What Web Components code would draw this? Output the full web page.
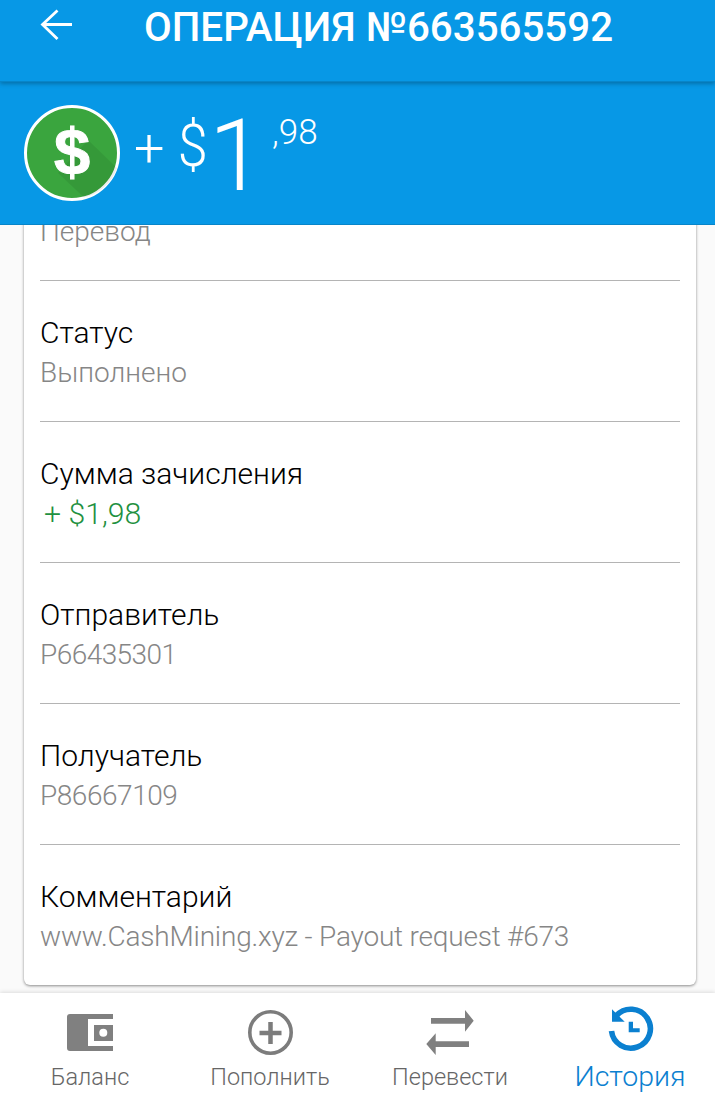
<!DOCTYPE html>
<html lang="ru">
<head>
<meta charset="utf-8">
<title>Операция</title>
<style>
  html, body { margin: 0; height: 100%; }
  body { font-family: Roboto, "Liberation Sans", sans-serif; background: #fafafa; overflow: hidden; }
  op-screen { height: 1103px; }
</style>
</head>
<body>
<op-screen>
  <op-topbar slot="top">ОПЕРАЦИЯ №663565592</op-topbar>
  <op-amount slot="top" whole="1" cents=",98"></op-amount>
  <op-card>
    <op-row value="Перевод"></op-row>
    <op-row label="Статус" value="Выполнено"></op-row>
    <op-row label="Сумма зачисления" value="+ $1,98" tone="green"></op-row>
    <op-row label="Отправитель" value="P66435301" tight="-0.55"></op-row>
    <op-row label="Получатель" value="P86667109" tight="-0.45"></op-row>
    <op-row label="Комментарий" value="www.CashMining.xyz - Payout request #673" tight="-0.2" last></op-row>
  </op-card>
  <op-tabs slot="bottom">
    <op-tab label="Баланс" icon="wallet"></op-tab>
    <op-tab label="Пополнить" icon="plus"></op-tab>
    <op-tab label="Перевести" icon="swap"></op-tab>
    <op-tab label="История" icon="history" active></op-tab>
  </op-tabs>
</op-screen>

<script>
class OpScreen extends HTMLElement {
    connectedCallback() {
        this.attachShadow({ mode: 'open' });
        this.shadowRoot.innerHTML = `
            <style>
                :host { display: flex; flex-direction: column; }
                .main {
                    flex: 1;
                    min-height: 0;
                    overflow: hidden;
                    display: flex;
                    flex-direction: column;
                    justify-content: flex-end;
                    padding: 0 19px 8px 24px;
                }
            </style>
            <slot name="top"></slot>
            <div class="main"><slot></slot></div>
            <slot name="bottom"></slot>
        `;
    }
}

class OpTopbar extends HTMLElement {
    connectedCallback() {
        this.attachShadow({ mode: 'open' });
        this.shadowRoot.innerHTML = `
            <style>
                :host {
                    display: block;
                    height: 81px;
                    background: #0798e6;
                    box-shadow: 0 1px 0 #0785c9, 0 3px 4px rgba(0, 0, 0, 0.25);
                    position: relative;
                    z-index: 2;
                }
                .bar { display: flex; align-items: flex-start; height: 100%; }
                svg { display: block; margin: 9px 0 0 40px; }
                .title {
                    margin-left: 70px;
                    font-size: 40.300px;
                    font-weight: 500;
                    line-height: 56px;
                    color: #fff;
                    white-space: nowrap;
                }
            </style>
            <div class="bar">
                <svg width="34" height="34" viewBox="0 0 34 34" fill="none" stroke="#fff" stroke-width="2.800">
                    <path d="M32 15.500H2.500M17.500 1.500L2.500 15.500 17.500 30"/>
                </svg>
                <div class="title"><slot></slot></div>
            </div>
        `;
    }
}

class OpAmount extends HTMLElement {
    connectedCallback() {
        this.attachShadow({ mode: 'open' });
        this.shadowRoot.innerHTML = `
            <style>
                :host {
                    display: block;
                    height: 144px;
                    background: #0798e6;
                    box-shadow: inset 0 -1px 0 #0785c9;
                    position: relative;
                    z-index: 1;
                }
                .wrap { display: flex; align-items: flex-start; color: #fff; font-weight: 300; padding: 24px 0 0 24px; }
                .coin { position: relative; width: 96px; height: 96px; flex: none; }
                .coin svg { display: block; }
                .coin span {
                    position: absolute;
                    inset: 0;
                    text-align: center;
                    font: 700 65px/94px "Liberation Sans", sans-serif;
                    -webkit-text-stroke: 1px #fff;
                    color: #fff;
                }
                .sign { font-size: 54px; line-height: 80px; margin: 4px 0 0 14px; white-space: pre; }
                .sign span { display: inline-block; transform: scaleY(1.1); transform-origin: 50% 80%; }
                .whole { font-size: 100px; line-height: 110px; margin: -4px 0 0 1px; }
                .cents { font-size: 35px; line-height: 44px; margin: 6px 0 0 8px; }
            </style>
            <div class="wrap">
                <div class="coin">
                    <svg width="96" height="96" viewBox="0 0 96 96">
                        <circle cx="48" cy="48" r="46.500" fill="#3aa53e" stroke="#fff" stroke-width="3"/>
                        <path d="M64 35L93 63A46 46 0 0 1 60 92.500L34 68Z" fill="#000" opacity="0.07"/>
                    </svg>
                    <span>$</span>
                </div>
                <div class="sign">+ <span>$</span></div>
                <div class="whole">${this.getAttribute('whole')}</div>
                <div class="cents">${this.getAttribute('cents')}</div>
            </div>
        `;
    }
}

class OpCard extends HTMLElement {
    connectedCallback() {
        this.attachShadow({ mode: 'open' });
        this.shadowRoot.innerHTML = `
            <style>
                :host {
                    display: block;
                    flex: none;
                    background: #fff;
                    border-radius: 0 0 6px 6px;
                    box-shadow: 0 1px 3px rgba(0, 0, 0, 0.45);
                    padding: 0 16px;
                }
            </style>
            <slot></slot>
        `;
    }
}

class OpRow extends HTMLElement {
    connectedCallback() {
        this.attachShadow({ mode: 'open' });
        const green = this.getAttribute('tone') === 'green';
        const tight = this.getAttribute('tight') || 0;
        const label = this.getAttribute('label');
        this.shadowRoot.innerHTML = `
            <style>
                :host {
                    display: block;
                    padding: ${label ? '32px' : '72px'} 0 28px;
                    border-bottom: ${this.hasAttribute('last') ? '0' : '1px solid #b4b4b4'};
                    line-height: 40px;
                    white-space: nowrap;
                }
                .label { color: #000; font-size: 30px; font-weight: 300; }
                .value {
                    color: ${green ? '#1f9141' : '#868686'};
                    font-size: ${green ? 30.200 : 28}px;
                    font-weight: 300;
                    letter-spacing: ${tight}px;
                    ${green ? 'padding-left: 4px;' : ''}
                }
            </style>
            ${label ? `<div class="label">${label}</div>` : ''}
            <div class="value">${this.getAttribute('value')}</div>
        `;
    }
}

class OpTabs extends HTMLElement {
    connectedCallback() {
        this.attachShadow({ mode: 'open' });
        this.shadowRoot.innerHTML = `
            <style>
                :host {
                    display: grid;
                    grid-template-columns: repeat(4, 180px);
                    height: 110px;
                    background: #fff;
                    box-shadow: 0 -1px 4px rgba(0, 0, 0, 0.12);
                    position: relative;
                }
            </style>
            <slot></slot>
        `;
    }
}

const TAB_ICONS = {
    wallet: `<path fill="#808080" d="M25 21H68V26H43V53H68V58H25Q22 58 22 55V24Q22 21 25 21Z"/>
             <path fill="#808080" fill-rule="evenodd" d="M49 32H68V48H49ZM58.300 35.700A4 4 0 1 0 58.301 43.700A4 4 0 1 0 58.300 35.700Z"/>`,
    plus: `<circle cx="45.500" cy="39.500" r="20.700" fill="none" stroke="#7c7c7c" stroke-width="3.600"/>
           <path d="M45.500 29V51M34.500 40H56.500" stroke="#7c7c7c" stroke-width="4.500" fill="none"/>`,
    swap: `<path fill="#808080" d="M26 25H60V17L68.700 27.700 60 38.700V30.700H26ZM64 48.300H30.700V40.300L21.300 51 30.700 62V54H64Z"/>`,
    history: `<path fill="none" stroke="#0b80d0" stroke-width="5.600" d="M31.500 22.500A19.500 19.500 0 1 1 26.500 38"/>
              <path fill="#0b80d0" d="M27 16.300V28.700H39.700ZM43.700 28.700H48V35.300H54.700V39.300H43.700Z"/>`
};

class OpTab extends HTMLElement {
    connectedCallback() {
        this.attachShadow({ mode: 'open' });
        const active = this.hasAttribute('active');
        this.shadowRoot.innerHTML = `
            <style>
                :host { display: block; text-align: center; white-space: nowrap; position: relative; }
                svg { display: block; margin: 0 auto; width: 90px; height: 66px; }
                .label {
                    font-weight: 300;
                    font-size: ${active ? 28.500 : 23.500}px;
                    line-height: 36px;
                    color: ${active ? '#0b80d0' : '#666'};
                }
            </style>
            <svg viewBox="0 0 90 66">${TAB_ICONS[this.getAttribute('icon')]}</svg>
            <div class="label">${this.getAttribute('label')}</div>
        `;
    }
}

customElements.define('op-screen', OpScreen);
customElements.define('op-topbar', OpTopbar);
customElements.define('op-amount', OpAmount);
customElements.define('op-card', OpCard);
customElements.define('op-row', OpRow);
customElements.define('op-tabs', OpTabs);
customElements.define('op-tab', OpTab);
</script>
</body>
</html>
